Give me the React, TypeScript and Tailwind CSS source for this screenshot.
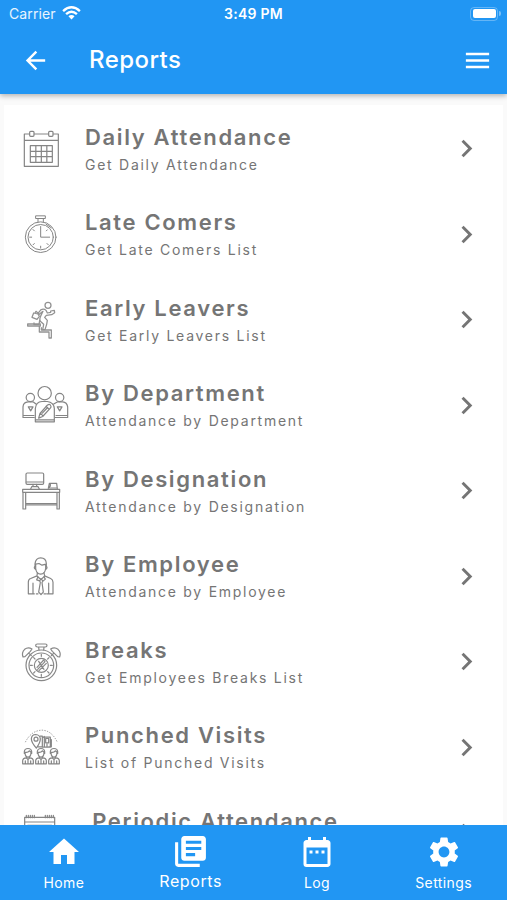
import type { ReactNode } from "react";
import {
  MdArrowBack,
  MdDateRange,
  MdHome,
  MdLibraryBooks,
  MdMenu,
  MdNavigateNext,
  MdSettings,
} from "react-icons/md";

function Art({ dy = 0, children }: { dy?: number; children: ReactNode }) {
  return (
    <svg
      viewBox="0 0 210 180"
      className="ml-[10px] h-[60px] w-[70px] shrink-0"
      fill="none"
      stroke="#858585"
      strokeWidth="3.600"
      strokeLinejoin="round"
      strokeLinecap="round"
    >
      <g transform={`translate(0 ${dy})`}>{children}</g>
    </svg>
  );
}

const CalendarArt = () => (
  <Art dy={3}>
    <path d="M58 42H43V139H145V42H130M73 42H115M43 61H145" />
    <rect x="59" y="34" width="13" height="15" rx="3" />
    <rect x="116" y="34" width="13" height="15" rx="3" />
    <path d="M61 77H127V127H61ZM61 94H127M61 110H127M77.500 77V127M94 77V127M110.500 77V127" />
  </Art>
);

const StopwatchArt = () => (
  <Art dy={1.5}>
    <circle cx="92" cy="98" r="46" strokeWidth="3" />
    <circle cx="92" cy="98" r="38" strokeWidth="3" />
    <path d="M78 34H106V42H78ZM84 42V52M100 42V52M92 66V98H119M59 98H65M92 125V131M69 75L73 79M69 121L73 117M115 121L111 117M112 76L109 79M108 59L124 70" strokeWidth="3" />
  </Art>
);

const RunnerArt = () => (
  <Art>
    <g strokeWidth="3.800" stroke="#929292">
      <circle cx="114" cy="46" r="9" />
      <path d="M92 60Q101 54 108 61L112 69L122 67V63L133 61L134 68L125 74L109 76L104 82L112 91L110 103L105 119H98L101 103L91 94Q87 87 94 74L99 64M93 59L84 70L88 73L97 65" />
      <path d="M71 69L84 72L88 79L81 88L66 82ZM75 69L78 64L83 68M89 91L87 104L72 104V99" />
      <path d="M53 102H91V108H53ZM88 108V126H117V144H124V120H94V113" />
    </g>
  </Art>
);

const TeamArt = () => (
  <Art dy={1.5}>
    <circle cx="104" cy="53" r="20" />
    <path d="M76 139V99Q78 79 96 78H112Q131 80 133 99V139ZM76 133H133" />
    <circle cx="61" cy="66" r="12.500" />
    <circle cx="149" cy="66" r="12.500" />
    <path d="M73 126H39V94Q40 80 54 79H69L79 86M136 126H173V94Q171 80 158 79H143L130 86M40 120H72M138 120H173" />
    <path d="M86 128L90 114L112 89Q119 84 122 90Q125 94 121 98L98 123ZM91 113L99 121M108 93L117 101M97 113L113 96" />
    <path d="M55 94H69L62 106ZM142 94H156L149 106Z" />
  </Art>
);

const DeskArt = () => (
  <Art dy={-3}>
    <rect x="48" y="39" width="53" height="34" rx="4" />
    <path d="M49 66H100M69 73V80M80 73V80M62 87L65 80H84L88 87M115 85L118 70H140L142 86M115 84H141M121 70V78L115 84" />
    <path d="M38 88H149V97H38ZM39 97V147H47V98M141 98V147H148V97M47 131H141M47 135H141" />
  </Art>
);

const EmployeeArt = () => (
  <Art dy={1.5}>
    <path d="M75 58V52Q77 34 92 34Q108 34 109 51V59M77 53L87 51L96 56L108 53M77 55V66Q79 82 92 83Q105 82 107 66V54M75 59Q70 65 77 69M109 59Q114 65 107 69" />
    <path d="M82 79L81 89L93 99L104 89L102 79M81 88L62 96Q55 98 55 107V142H73M104 88L122 96Q129 99 129 107V142H110M69 110V141M116 110V141" />
    <path d="M84 91L80 100L89 103L93 97L99 104L106 98L102 91M89 103L91 108L86 137L93 144L100 137L96 108L99 103M79 142H84M102 142H107" />
  </Art>
);

const AlarmArt = () => (
  <Art>
    <g stroke="#888888">
      <circle cx="94" cy="100" r="46" />
      <circle cx="94" cy="100" r="37" />
      <circle cx="94" cy="100" r="21" />
      <path d="M81 106L101 84L105 89L83 112M87 116L109 94M86 88L102 112M94 67V73M94 127V133M61 100H67M121 100H127M71 77L75 81M117 77L113 81M71 123L75 119M117 123L113 119" />
      <path d="M82 36H106Q111 36 111 40Q111 45 106 45H82Q77 45 77 40Q77 36 82 36ZM86 46L87 54M102 46L101 54" />
      <path d="M39 75Q34 62 44 52Q54 44 66 51L61 58L45 74ZM149 75Q154 62 144 52Q134 44 122 51L127 58L143 74ZM58 65L64 71M130 65L124 71" />
    </g>
  </Art>
);

const Visitor = ({ x }: { x: number }) => (
  <g transform={`translate(${x} 0)`}>
    <path d="M-11 108V102Q-10 93 0 93Q10 93 11 102V108M-10 104Q0 106 4 100L10 105M-9 106Q-8 119 0 119Q8 119 9 106M-5 117V121L0 126L5 121V117M-5 121Q-16 122-16 130V139H16V130Q16 122 5 121M0 126V136M-8 130V138M8 130V138" />
  </g>
);

const VisitsArt = () => (
  <Art dy={1.5}>
    <path d="M46 74Q64 39 96 38Q125 39 142 74" strokeWidth="2.600" strokeLinecap="butt" strokeDasharray="4 4" />
    <path d="M79 92Q64 75 64 64Q65 51 77 51Q90 52 91 64Q91 76 79 92Z" />
    <circle cx="78" cy="65" r="6" />
    <path d="M91 56H97V88H84M97 61L103 57V89M103 59H121V89H97M107 63H116V76H107ZM111 80V88M116 88H124V66" />
    <Visitor x={54} />
    <Visitor x={93} />
    <Visitor x={132} />
  </Art>
);

const PeriodicArt = () => (
  <Art>
    <path d="M44 43H134V137H44ZM44 57H134M53 67H125V124H53ZM53 80H125M53 96H125M71 67V124M89 67V124M107 67V124" />
    <path d="M49 37V44M55 37V44M61 37V44M67 37V44M73 37V44M106 37V44M112 37V44M118 37V44M124 37V44M130 37V44" />
  </Art>
);

const rows = [
  { title: "Daily Attendance", note: "Get Daily Attendance", art: <CalendarArt /> },
  { title: "Late Comers", note: "Get Late Comers List", art: <StopwatchArt /> },
  { title: "Early Leavers", note: "Get Early Leavers List", art: <RunnerArt /> },
  { title: "By Department", note: "Attendance by Department", art: <TeamArt /> },
  { title: "By Designation", note: "Attendance by Designation", art: <DeskArt /> },
  { title: "By Employee", note: "Attendance by Employee", art: <EmployeeArt /> },
  { title: "Breaks", note: "Get Employees Breaks List", art: <AlarmArt /> },
  { title: "Punched Visits", note: "List of Punched Visits", art: <VisitsArt /> },
  { title: " Periodic Attendance", note: "", art: <PeriodicArt /> },
];

function StatusBar() {
  return (
    <div className="grid h-[27px] grid-cols-3 items-center text-[14px] leading-none">
      <div className="flex items-center gap-[6px] pl-[9px]">
        <span className="tracking-[0.100px] text-white/90">Carrier</span>
        <svg viewBox="0 0 20 15" className="mb-[2px] h-[14px] w-[19px]" fill="none" stroke="white" strokeWidth="2.600">
          <path d="M1 5.400Q10-2.500 19 5.400M4.200 8.700Q10 3.600 15.800 8.700" />
          <path d="M6.700 11.100Q10 8.300 13.300 11.100L10 14.500Z" fill="white" stroke="none" />
        </svg>
      </div>
      <span className="text-center font-semibold tracking-[0.250px]">3:49 PM</span>
      <div className="flex items-center justify-end pr-[6px]">
        <div className="h-[14px] w-[28px] rounded-[4px] border border-white/30 p-[1.500px]">
          <div className="h-full rounded-[2px] bg-white" />
        </div>
        <div className="ml-px h-[5px] w-[2px] rounded-r-full bg-white/40" />
      </div>
    </div>
  );
}

export default function App() {
  return (
    <div className="flex h-[900px] w-[507px] flex-col overflow-hidden bg-[#fafafa] font-['Inter',sans-serif]">
      <header className="z-10 h-[94px] shrink-0 bg-[#2196f3] text-white shadow-[0_2px_5px_rgba(0,0,0,0.28)]">
        <StatusBar />
        <div className="flex h-[66px] items-center pr-[14px] pl-[21px]">
          <MdArrowBack className="size-[29px]" />
          <h1 className="ml-[39px] flex-1 text-[24px] font-medium tracking-[0.450px]">Reports</h1>
          <MdMenu className="size-[31px]" />
        </div>
      </header>

      <main className="mx-[4px] mt-[11px] min-h-0 flex-1 overflow-hidden bg-white pt-[1px]">
        {rows.map(({ title, note, art }) => (
          <div key={title} className="-ml-[4px] flex h-[85.500px] w-[507px] items-center">
            {art}
            <div className="ml-[5px] flex-1 text-[#757575]">
              <h2 className="h-[30px] text-[22px] leading-[30px] font-semibold tracking-[1.650px] whitespace-pre">{title}</h2>
              <p className="h-[24px] text-[14px] leading-[25px] tracking-[1.730px]">{note}</p>
            </div>
            <MdNavigateNext className="mr-[23px] size-[35px] text-[#757575]" />
          </div>
        ))}
      </main>

      <nav className="grid h-[75px] shrink-0 grid-cols-4 bg-[#2196f3] text-center text-white">
        <div className="flex flex-col items-center pt-[9px] pl-[1px] text-[14px]">
          <MdHome className="size-[36px]" />
          <span className="mt-[3px] leading-[20px] tracking-[0.400px]">Home</span>
        </div>
        <div className="flex flex-col items-center pt-[8px] pl-[1px] text-[16px]">
          <MdLibraryBooks className="size-[37px]" />
          <span className="mt-[1px] leading-[20px] tracking-[0.600px]">Reports</span>
        </div>
        <div className="flex flex-col items-center pt-[9px] text-[14px]">
          <MdDateRange className="size-[36px]" />
          <span className="mt-[3px] leading-[20px] tracking-[0.300px]">Log</span>
        </div>
        <div className="flex flex-col items-center pt-[9px] text-[14px]">
          <MdSettings className="size-[36px]" />
          <span className="mt-[3px] leading-[20px] tracking-[0.400px]">Settings</span>
        </div>
      </nav>
    </div>
  );
}
